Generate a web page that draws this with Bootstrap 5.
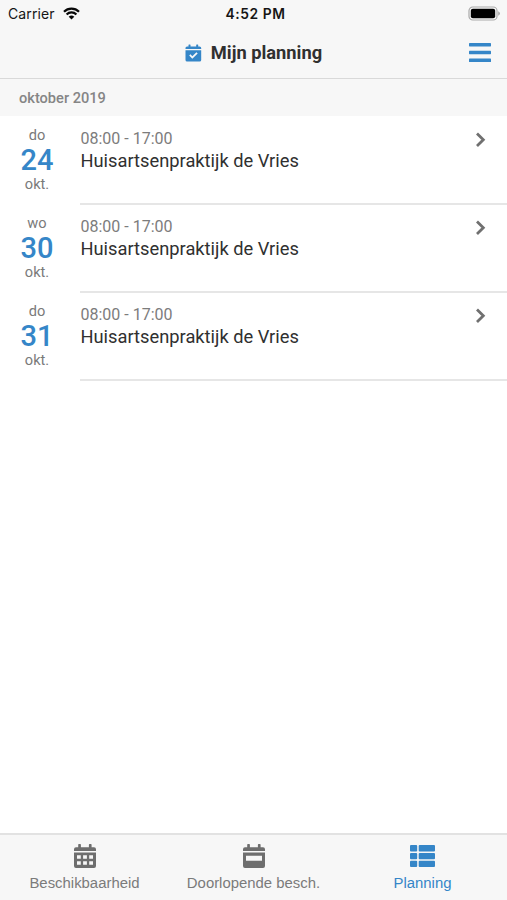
<!DOCTYPE html>
<html lang="nl">
<head>
<meta charset="utf-8">
<meta name="viewport" content="width=device-width, initial-scale=1">
<title>Mijn planning</title>
<link href="https://cdn.jsdelivr.net/npm/bootstrap@5.3.0/dist/css/bootstrap.min.css" rel="stylesheet">
<style>
:root { --brand: #3586c8; --bar: #f7f7f7; --muted: #7a7a7a; }
body { font-family: Roboto, "Liberation Sans", sans-serif; color: #303030; background: #fff; overflow: hidden; }
svg { display: block; flex: none; }
.top-area { background: var(--bar); height: 79px; border-bottom: 1px solid #d9d9d9; }
.status-bar { height: 27px; padding: 0 7px 0 8px; font-family: Inter, sans-serif; font-size: 13.5px; line-height: 27px; color: #151515; }
.carrier { font-size: 14px; letter-spacing: .1px; }
.clock { font-size: 13.8px; font-weight: 600; letter-spacing: .55px; padding: 1px 0 0 3px; }
.title-bar { height: 51px; padding: 0 16px 0 38px; }
.page-title { font-size: 18.3px; font-weight: 700; line-height: 24px; color: #303030; padding-left: 1px; }
.month-head { height: 37px; padding: 0 19px; background: var(--bar); color: #858585; font-size: 14.6px; font-weight: 500; line-height: 38px; }
.shift { height: 88.33px; }
.shift-list { padding-top: .5px; }
.day-col { width: 74px; padding-top: 10.2px; color: var(--muted); font-size: 14.6px; line-height: 17px; }
.day-num { font-size: 29px; font-weight: 500; line-height: 32px; color: var(--brand); }
.shift-body { margin-left: 6px; padding: 11.2px 21.5px 0 .5px; border-bottom: 2px solid #e6e6e6; }
.hours { font-size: 16px; line-height: 21px; color: #7c7c7c; }
.place { font-size: 18.3px; line-height: 23px; color: #303030; }
.chev { margin-top: 4px; }
.tab-bar { height: 67px; background: var(--bar); border-top: 2px solid #e2e2e2; }
.tab { padding-top: 8px; color: #7b7b7b; font-family: "Liberation Sans", sans-serif; font-size: 14.9px; line-height: 18px; text-decoration: none; white-space: nowrap; }
.tab svg { margin-bottom: 5px; color: #6e6e6e; }
.tab.on, .tab.on svg { color: var(--brand); }
</style>
<script src="https://cdn.jsdelivr.net/npm/bootstrap@5.3.0/dist/js/bootstrap.bundle.min.js"></script>
</head>
<body>
<div class="d-flex flex-column vh-100">
  <header class="top-area">
    <div class="status-bar d-flex align-items-center">
      <div class="col d-flex align-items-center"><span class="carrier">Carrier</span>
        <svg class="ms-2" width="17" height="13" viewBox="0 0 17 13" fill="none" stroke="#080808" stroke-width="2.2"><path d="M1 4.7a10.6 10.6 0 0 1 15 0M3.6 7.5a6.9 6.9 0 0 1 9.8 0"/><path d="M8.5 12.6 5.7 9.8a4 4 0 0 1 5.6 0z" fill="#080808" stroke="none"/></svg>
      </div>
      <div class="clock">4:52 PM</div>
      <div class="col d-flex justify-content-end">
        <svg width="32" height="15" viewBox="0 0 32 15"><rect x="1" y="1" width="28" height="13" rx="3.8" fill="#fafafa" stroke="#a9a9a9" stroke-width="1.2"/><rect x="2.8" y="2.8" width="24.4" height="9.4" rx="2"/><path d="M30.3 5.2q1.5.7 1.5 2.3t-1.5 2.3z" fill="#999"/></svg>
      </div>
    </div>
    <div class="title-bar d-flex align-items-center">
      <div class="d-flex flex-fill justify-content-center align-items-center">
        <svg class="me-2" width="17" height="18" viewBox="0 0 17 18" fill="#3586c8"><path d="M.5 5V4a1.6 1.6 0 0 1 1.6-1.6h1.4V.9q0-.5.5-.5h1q.5 0 .5.5v1.5h5.7V.9q0-.5.5-.5h1q.5 0 .5.5v1.5h1.4A1.6 1.6 0 0 1 16.2 4v1z"/><path fill-rule="evenodd" d="M.5 6.2h15.7V16a1.6 1.6 0 0 1-1.6 1.6H2.1A1.6 1.6 0 0 1 .5 16zM4.2 11.6l3.1 3.2 5.4-5.3-1.3-1.3-4.1 4-1.8-1.9z"/></svg>
        <h1 class="page-title mb-0">Mijn planning</h1>
      </div>
      <svg width="22" height="20" viewBox="0 0 22 20" fill="#3586c8"><rect width="22" height="3.4" rx=".6"/><rect y="7.8" width="22" height="3.4" rx=".6"/><rect y="15.6" width="22" height="3.4" rx=".6"/></svg>
    </div>
  </header>
  <main class="flex-fill">
    <div class="month-head">oktober 2019</div>
    <div class="shift-list">
      <div class="shift d-flex">
        <div class="day-col text-center"><div>do</div><div class="day-num">24</div><div>okt.</div></div>
        <div class="shift-body flex-fill d-flex justify-content-between align-items-start">
          <div><div class="hours">08:00 - 17:00</div><div class="place">Huisartsenpraktijk de Vries</div></div>
          <svg class="chev" width="11" height="16" viewBox="0 0 11 16" fill="none" stroke="#707070" stroke-width="2.8"><path d="m2 1.6 6.3 6.2L2 14"/></svg>
        </div>
      </div>
      <div class="shift d-flex">
        <div class="day-col text-center"><div>wo</div><div class="day-num">30</div><div>okt.</div></div>
        <div class="shift-body flex-fill d-flex justify-content-between align-items-start">
          <div><div class="hours">08:00 - 17:00</div><div class="place">Huisartsenpraktijk de Vries</div></div>
          <svg class="chev" width="11" height="16" viewBox="0 0 11 16" fill="none" stroke="#707070" stroke-width="2.8"><path d="m2 1.6 6.3 6.2L2 14"/></svg>
        </div>
      </div>
      <div class="shift d-flex">
        <div class="day-col text-center"><div>do</div><div class="day-num">31</div><div>okt.</div></div>
        <div class="shift-body flex-fill d-flex justify-content-between align-items-start">
          <div><div class="hours">08:00 - 17:00</div><div class="place">Huisartsenpraktijk de Vries</div></div>
          <svg class="chev" width="11" height="16" viewBox="0 0 11 16" fill="none" stroke="#707070" stroke-width="2.8"><path d="m2 1.6 6.3 6.2L2 14"/></svg>
        </div>
      </div>
    </div>
  </main>
  <nav class="tab-bar d-flex">
    <a class="tab col-4 d-flex flex-column align-items-center" href="#">
      <svg width="22" height="26" viewBox="0 0 22 26" fill="currentColor"><path d="M0 8V6.2a2 2 0 0 1 2-2h2.200V1.800q0-.7.7-.7h1.300q.7 0 .7.7v2.400h8V1.800q0-.7.7-.7h1.300q.7 0 .7.7v2.400H20a2 2 0 0 1 2 2V8z"/><path fill-rule="evenodd" d="M0 9.400h22V23a2 2 0 0 1-2 2H2a2 2 0 0 1-2-2zM3 12.300v3.500h3.800v-3.500zm6.100 0v3.500h3.800v-3.500zm6.100 0v3.500H19v-3.500zM3 18.300v3.500h3.800v-3.500zm6.100 0v3.500h3.800v-3.500zm6.100 0v3.500H19v-3.500z"/></svg>
      <span>Beschikbaarheid</span>
    </a>
    <a class="tab col-4 d-flex flex-column align-items-center" href="#">
      <svg width="22" height="26" viewBox="0 0 22 26" fill="currentColor"><path d="M0 8V6.200a2 2 0 0 1 2-2h2.200V1.800q0-.7.7-.7h1.300q.7 0 .7.7v2.400h8V1.800q0-.7.7-.7h1.300q.7 0 .7.7v2.400H20a2 2 0 0 1 2 2V8z"/><path fill-rule="evenodd" d="M0 9.400h22V23a2 2 0 0 1-2 2H2a2 2 0 0 1-2-2zM3 12.700v5h16v-5z"/></svg>
      <span>Doorlopende besch.</span>
    </a>
    <a class="tab on col-4 d-flex flex-column align-items-center" href="#">
      <svg width="25" height="26" viewBox="0 0 25 26" fill="currentColor"><rect y="2" width="7.2" height="6.4" rx="1"/><rect x="8.7" y="2" width="16.3" height="6.4" rx="1"/><rect y="9.9" width="7.2" height="6.4" rx="1"/><rect x="8.7" y="9.9" width="16.3" height="6.4" rx="1"/><rect y="17.8" width="7.2" height="6.2" rx="1"/><rect x="8.7" y="17.8" width="16.3" height="6.2" rx="1"/></svg>
      <span>Planning</span>
    </a>
  </nav>
</div>
</body>
</html>
